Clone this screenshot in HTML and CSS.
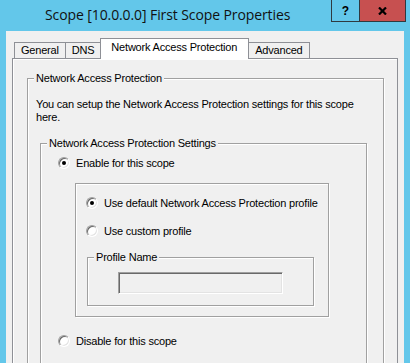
FILE: index.html
```html
<!DOCTYPE html>
<html>
<head>
<meta charset="utf-8">
<link rel="stylesheet" href="styles.css">
</head>
<body>
<div class="window">
  <div class="titlebar">
    <div class="title">Scope [10.0.0.0] First Scope Properties</div>
    <div class="caption-buttons">
      <div class="cap-btn help">?</div>
      <div class="cap-btn close">
        <svg width="9" height="8" viewBox="0 0 9 8"><path d="M1 0.5 L8 7.5 M8 0.5 L1 7.5" stroke="#000" stroke-width="2.2" fill="none"/></svg>
      </div>
    </div>
  </div>
  <div class="client">
    <div class="tabs">
      <div class="tab">General</div>
      <div class="tab">DNS</div>
      <div class="tab active">Network Access Protection</div>
      <div class="tab">Advanced</div>
    </div>
    <div class="panel">
      <fieldset class="group g1">
        <legend>Network Access Protection</legend>
        <p class="desc">You can setup the Network Access Protection settings for this scope here.</p>
        <fieldset class="group g2">
          <legend>Network Access Protection Settings</legend>
          <label class="option"><span class="radio checked"></span>Enable for this scope</label>
          <fieldset class="group g3">
            <label class="option"><span class="radio checked"></span>Use default Network Access Protection profile</label>
            <label class="option second"><span class="radio"></span>Use custom profile</label>
            <fieldset class="group g4">
              <legend>Profile Name</legend>
              <div class="textbox"></div>
            </fieldset>
          </fieldset>
          <label class="option disable"><span class="radio"></span>Disable for this scope</label>
        </fieldset>
      </fieldset>
    </div>
  </div>
</div>
</body>
</html>
```
FILE: styles.css
```css
html, body {
  margin: 0;
  height: 363px;
  overflow: hidden;
}
body {
  background: #63c7ea;
  font-family: "Liberation Sans", Arial, sans-serif;
  font-size: 11px;
  letter-spacing: -0.2px;
  color: #000;
}
.window {
  height: 363px;
  display: flex;
  flex-direction: column;
}
.titlebar {
  flex: none;
  height: 31px;
  display: flex;
  align-items: flex-start;
}
.title {
  flex: 1;
  padding-left: 45px;
  font-family: "Open Sans", "Noto Sans", sans-serif;
  font-size: 14px;
  letter-spacing: -0.1px;
  line-height: 30px;
  color: #111;
}
.caption-buttons {
  display: flex;
  margin-right: 4px;
  height: 21px;
  border: 1px solid #2f3a40;
  border-top: 0;
}
.cap-btn {
  display: flex;
  align-items: center;
  justify-content: center;
}
.help {
  width: 27px;
  background: #63c7ea;
  font-weight: bold;
  font-size: 12px;
  letter-spacing: 0;
}
.close {
  width: 45px;
  background: #c75050;
  border-left: 1px solid #2f3a40;
}
.client {
  flex: 1;
  margin: 0 6px;
  background: #f0f0f0;
  padding-top: 7px;
  display: flex;
  flex-direction: column;
  min-height: 0;
}
.tabs {
  flex: none;
  height: 20px;
  display: flex;
  align-items: flex-end;
  padding-left: 8px;
  position: relative;
  z-index: 1;
}
.tab {
  height: 16px;
  box-sizing: border-box;
  border: 1px solid #8e9096;
  border-bottom: 0;
  padding: 0 6px;
  line-height: 15px;
  margin-right: -1px;
  background: #f0f0f0;
  white-space: nowrap;
}
.tab.active {
  height: 21px;
  margin-bottom: -1px;
  padding: 0 11px 0 10px;
  line-height: 17px;
  background: #fff;
  position: relative;
  z-index: 2;
}
.panel {
  flex: 1;
  margin: 0 6px;
  border: 1px solid #8e9096;
  box-shadow: inset 1px 1px 0 #fff;
  padding: 12px 13px 0 14px;
  background: #f0f0f0;
}
.group {
  margin: 0;
  min-width: 0;
  border: 1px solid #a0a0a0;
  box-shadow: inset 1px 1px 0 #fff, 1px 1px 0 #fff;
}
.group legend {
  padding: 0 2px;
  line-height: 14px;
  background: #f0f0f0;
}
.g1 {
  padding: 13px 16px 40px 8px;
}
.g1 > legend {
  margin-left: -2px;
}
.desc {
  margin: 0;
  line-height: 13px;
}
.g2 {
  margin: 12px 0 0 4px;
  padding: 6px 0 40px 17px;
}
.g2 > legend {
  margin-left: -11px;
}
.option {
  display: flex;
  align-items: center;
  height: 14px;
  gap: 6px;
  white-space: nowrap;
}
.option.second {
  margin-top: 14px;
}
.option.disable {
  margin-top: 17px;
}
.radio {
  flex: none;
  width: 12px;
  height: 12px;
  box-sizing: border-box;
  border-radius: 50%;
  border: 1px solid;
  border-color: #a0a0a0 #ffffff #ffffff #a0a0a0;
  box-shadow: inset 1px 1px 0 #696969, inset -1px -1px 0 #e3e3e3;
  background: #fff;
  display: flex;
  align-items: center;
  justify-content: center;
}
.radio.checked::after {
  content: "";
  width: 4px;
  height: 4px;
  border-radius: 50%;
  background: #000;
}
.g3 {
  margin: 13px 37px 0 17px;
  padding: 12px 14px 10px 10px;
}
.g4 {
  margin: 12px 0 0 1px;
  padding: 8px 30px 11px 30px;
}
.g4 > legend {
  margin-left: -24px;
}
.textbox {
  height: 22px;
  box-sizing: border-box;
  border: 1px solid;
  border-color: #a0a0a0 #ffffff #ffffff #a0a0a0;
  box-shadow: inset 1px 1px 0 #696969, inset -1px -1px 0 #e3e3e3;
  background: #f0f0f0;
}
```
